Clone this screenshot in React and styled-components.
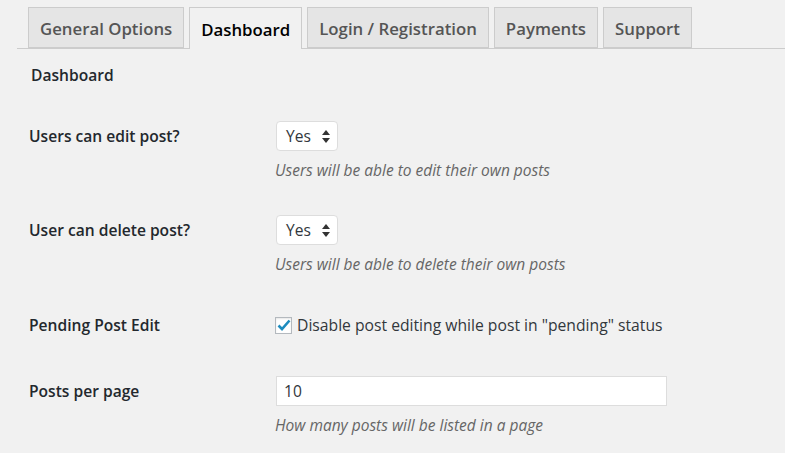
import React from "react";
import styled, { createGlobalStyle } from "styled-components";

const GlobalStyle = createGlobalStyle`
  body {
    margin: 0;
    background: #f1f1f1;
    font-family: "Open Sans", "Liberation Sans", sans-serif;
    color: #23282d;
  }
`;

const Page = styled.div`
  padding: 7px 0 0 17px;
`;

const TabBar = styled.div`
  display: flex;
  gap: 5px;
  padding-left: 11px;
  border-bottom: 1px solid #ccc;
  height: 41px;
`;

const Tab = styled.div`
  box-sizing: border-box;
  height: ${(p) => (p.$active ? "42px" : "41px")};
  padding: 1px 11px 0;
  display: flex;
  align-items: center;
  font-size: 16.8px;
  font-weight: 600;
  border: 1px solid #ccc;
  border-bottom: ${(p) => (p.$active ? "none" : "1px solid #ccc")};
  background: ${(p) => (p.$active ? "#f1f1f1" : "#e5e5e5")};
  color: ${(p) => (p.$active ? "#000" : "#555")};
`;

const Heading = styled.h2`
  margin: 16px 0 0 14px;
  font-size: 15.6px;
  font-weight: 600;
  line-height: 20px;
  color: #23282d;
`;

const Form = styled.div`
  margin-top: 36px;
  padding-left: 12px;
  display: flex;
  flex-direction: column;
  gap: 35px;
`;

const Row = styled.div`
  display: grid;
  grid-template-columns: 246px 1fr;
  align-items: start;
  margin-top: ${(p) => p.$shift || 0}px;
`;

const Label = styled.div`
  font-size: 15.6px;
  font-weight: 600;
  line-height: 30px;
  color: #23282d;
`;

const Field = styled.div`
  display: flex;
  flex-direction: column;
  align-items: flex-start;
`;

const Select = styled.div`
  box-sizing: border-box;
  height: 30px;
  width: 62px;
  margin-left: 1px;
  background: #fff;
  border: 1px solid #ddd;
  border-radius: 4px;
  display: flex;
  align-items: center;
  justify-content: space-between;
  padding: 0 7px 0 9px;
  font-size: 15.6px;
  color: #32373c;
`;

const Desc = styled.div`
  margin-top: 9px;
  font-size: 15.5px;
  font-style: italic;
  line-height: 20px;
  color: #666;
`;

const CheckLine = styled.label`
  display: flex;
  align-items: center;
  gap: 5px;
  height: 30px;
  font-size: 15.7px;
  color: #32373c;
`;

const Box = styled.span`
  box-sizing: border-box;
  width: 17px;
  height: 17px;
  background: #fff;
  border: 1px solid #b4b9be;
  box-shadow: inset 0 1px 2px rgba(0, 0, 0, 0.1);
  display: flex;
  align-items: center;
  justify-content: center;
`;

const TextInput = styled.div`
  box-sizing: border-box;
  width: 391px;
  height: 30px;
  margin-left: 1px;
  background: #fff;
  border: 1px solid #ddd;
  display: flex;
  align-items: center;
  padding-left: 7px;
  font-size: 15.6px;
  color: #32373c;
`;

const Arrows = () => (
  <svg width="8" height="13" viewBox="0 0 8 13">
    <path d="M4 0 L8 5 L0 5 Z" fill="#333" />
    <path d="M4 13 L8 8 L0 8 Z" fill="#333" />
  </svg>
);

const tabs = ["General Options", "Dashboard", "Login / Registration", "Payments", "Support"];

export default function App() {
  return (
    <Page>
      <GlobalStyle />
      <TabBar>
        {tabs.map((t) => (
          <Tab key={t} $active={t === "Dashboard"}>
            {t}
          </Tab>
        ))}
      </TabBar>
      <Heading>Dashboard</Heading>
      <Form>
        <Row>
          <Label>Users can edit post?</Label>
          <Field>
            <Select>
              Yes <Arrows />
            </Select>
            <Desc>Users will be able to edit their own posts</Desc>
          </Field>
        </Row>
        <Row>
          <Label>User can delete post?</Label>
          <Field>
            <Select>
              Yes <Arrows />
            </Select>
            <Desc>Users will be able to delete their own posts</Desc>
          </Field>
        </Row>
        <Row $shift={1}>
          <Label>Pending Post Edit</Label>
          <Field>
            <CheckLine>
              <Box>
                <svg width="14" height="12" viewBox="0 0 14 12">
                  <path d="M1.5 6.5 L5 10 L12.5 1.5" stroke="#1e8cbe" strokeWidth="2.6" fill="none" />
                </svg>
              </Box>
              Disable post editing while post in "pending" status
            </CheckLine>
          </Field>
        </Row>
        <Row $shift={1}>
          <Label>Posts per page</Label>
          <Field>
            <TextInput>10</TextInput>
            <Desc>How many posts will be listed in a page</Desc>
          </Field>
        </Row>
      </Form>
    </Page>
  );
}
